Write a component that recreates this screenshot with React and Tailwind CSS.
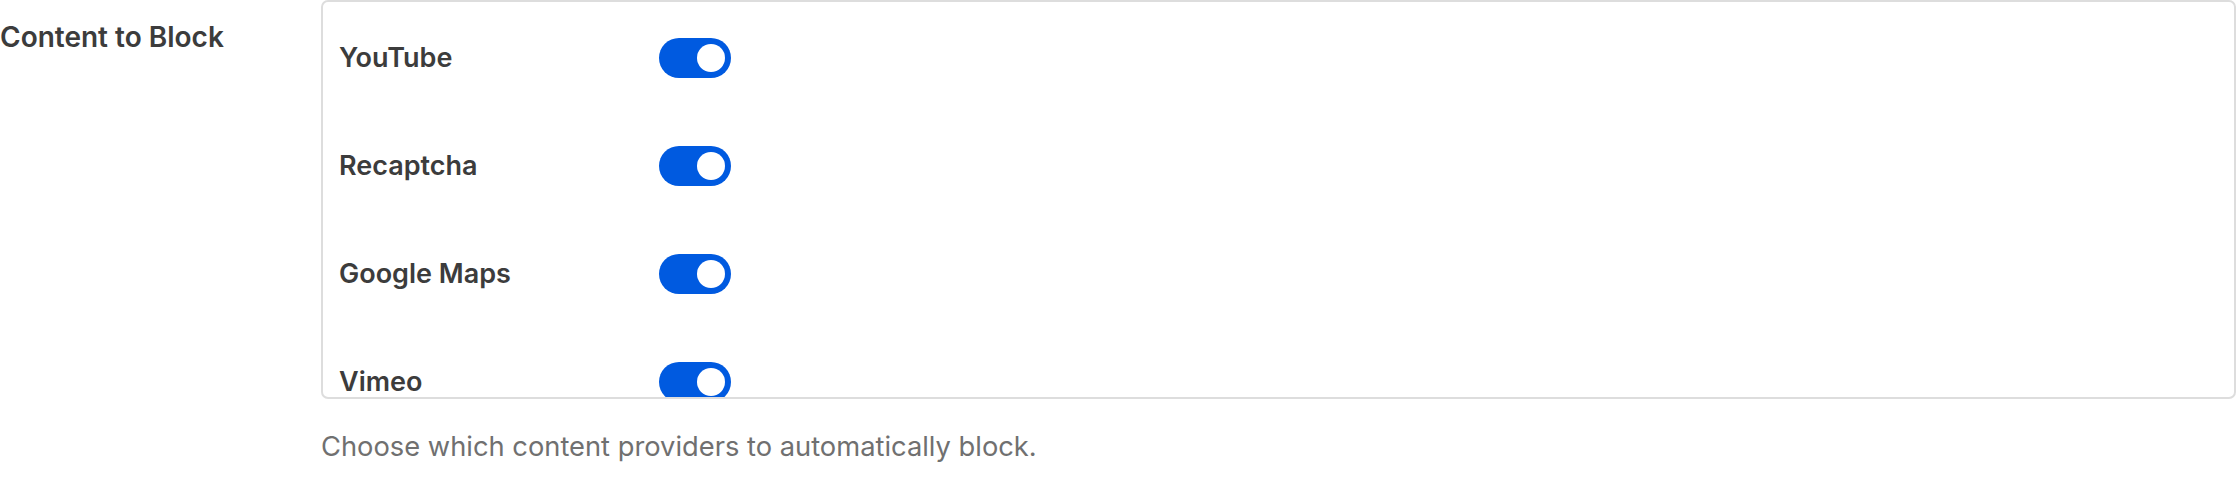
import React from "react";

const items = ["YouTube", "Recaptcha", "Google Maps", "Vimeo"];

function Toggle() {
  return (
    <div className="flex h-[40px] w-[72px] shrink-0 items-center justify-end rounded-full bg-[#005ae0] p-[6px]">
      <div className="h-[28px] w-[28px] rounded-full bg-white" />
    </div>
  );
}

export default function App() {
  return (
    <div className="flex min-h-[498px] w-[2236px] bg-white font-['Inter',sans-serif] text-[#3c3c3c]">
      <div className="w-[321px] shrink-0 pt-[21px] text-[28px] font-semibold leading-[32px]">
        Content to Block
      </div>
      <div className="flex flex-1 flex-col">
        <div className="h-[399px] overflow-hidden rounded-[7px] border-2 border-[#dddddd] pl-[16px] pt-[36px]">
          <div className="flex flex-col gap-[68px]">
            {items.map((it) => (
              <div key={it} className="flex h-[40px] items-center">
                <div className="w-[320px] shrink-0 text-[27px] font-semibold leading-[32px]">{it}</div>
                <Toggle />
              </div>
            ))}
          </div>
        </div>
        <p className="mt-[32px] text-[27.3px] leading-[32px] text-[#707070]">
          Choose which content providers to automatically block.
        </p>
      </div>
    </div>
  );
}
